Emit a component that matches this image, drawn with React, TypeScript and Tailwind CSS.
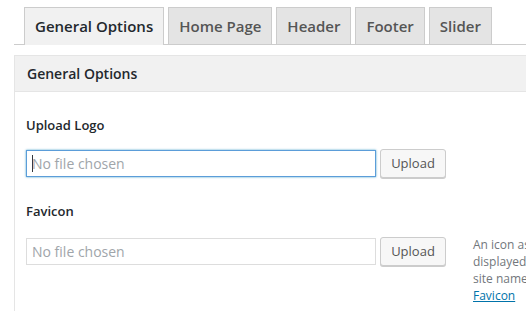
const tabs = ['General Options', 'Home Page', 'Header', 'Footer', 'Slider'];

const FileField = ({ focused }: { focused?: boolean }) => (
  <div
    className={`shrink-0 w-[350px] h-[27px] flex items-center pl-[5px] bg-white border ${
      focused ? 'border-[#5b9dd9] shadow-[0_0_2px_rgba(30,140,190,0.8)]' : 'border-[#dddddd]'
    }`}
  >
    {focused && <span className="w-px h-[17px] bg-[#32373c] mr-[-1px]" />}
    <span className="text-[14px] text-[#a0a5aa] leading-none">No file chosen</span>
  </div>
);

const UploadButton = () => (
  <button className="shrink-0 ml-[4px] w-[66px] h-[29px] rounded-[3px] border border-[#cccccc] bg-[#f7f7f7] text-[13px] text-[#555555] shadow-[0_1px_0_#cccccc]">
    Upload
  </button>
);

export default function App() {
  return (
    <div className="w-[526px] h-[311px] overflow-hidden bg-white font-['Open_Sans',sans-serif]">
      {/* tabs */}
      <div className="ml-[14px] pt-[7px] pl-[10px] flex items-end gap-[4px] border-b border-[#cccccc]">
        {tabs.map((t, i) =>
          i === 0 ? (
            <div
              key={t}
              className="h-[38px] -mb-px px-[10px] flex items-center border border-b-0 border-[#cccccc] bg-[#f1f1f1] text-[15px] font-semibold text-[#23282d]"
            >
              {t}
            </div>
          ) : (
            <div
              key={t}
              className="h-[37px] px-[10px] flex items-center border border-b-0 border-[#cccccc] bg-[#e4e4e4] text-[15px] font-semibold text-[#555555]"
            >
              {t}
            </div>
          )
        )}
      </div>

      {/* panel */}
      <div className="ml-[14px] mt-[10px] border-l border-t border-[#e5e5e5] h-[400px]">
        <div className="h-[36px] flex items-center pl-[12px] bg-[#f1f1f1] border-b border-[#e5e5e5] text-[14px] font-semibold text-[#23282d]">
          General Options
        </div>
        <div className="pl-[11px] pt-[24px]">
          <div className="text-[13px] leading-[18px] font-semibold text-[#23282d]">Upload Logo</div>
          <div className="mt-[15px] flex items-center">
            <FileField focused />
            <UploadButton />
          </div>

          <div className="mt-[24px] text-[13px] leading-[18px] font-semibold text-[#23282d]">Favicon</div>
          <div className="mt-[17px] flex items-start">
            <div className="mt-px shrink-0">
              <FileField />
            </div>
            <UploadButton />
            <div className="shrink-0 ml-[27px] -mt-px text-[12px] leading-[17px] text-[#72777c] whitespace-nowrap">
              <div>An icon associated with your site, typically</div>
              <div>displayed in the browser tab next to the</div>
              <div>site name. Learn more about</div>
              <a className="text-[#0073aa] underline">Favicon</a>
            </div>
          </div>
        </div>
      </div>
    </div>
  );
}
